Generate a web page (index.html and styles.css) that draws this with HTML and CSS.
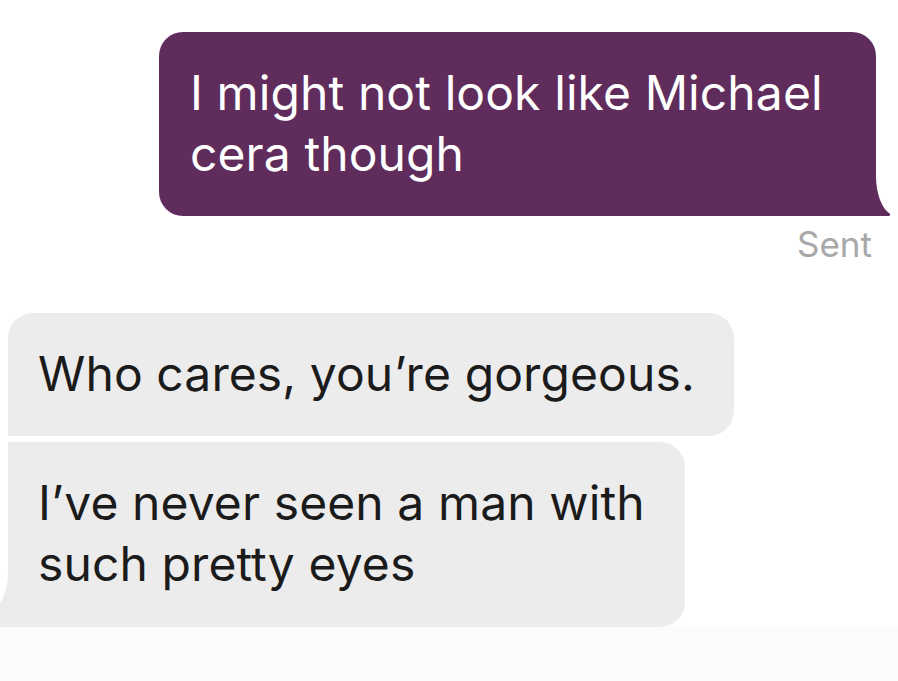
FILE: index.html
```html
<!DOCTYPE html>
<html lang="en">
<head>
<meta charset="utf-8">
<title>Chat</title>
<link rel="stylesheet" href="styles.css">
</head>
<body>
<div class="page">
  <div class="thread">
    <div class="row row-out">
      <div class="bubble bubble-out">
        <p class="msg">I might not look like Michael cera though</p>
        <svg class="tail tail-out" width="18" height="40" viewBox="0 0 18 40" aria-hidden="true">
          <path d="M0 0 L2 0 C2 18 8 32 15 37 C17 38.5 16.5 40 14 40 L0 40 Z" fill="#5f2c5c"/>
        </svg>
      </div>
    </div>
    <div class="status">Sent</div>
    <div class="group-in">
      <div class="bubble bubble-in bubble-in-first">
        <p class="msg">Who cares, you’re gorgeous.</p>
      </div>
      <div class="bubble bubble-in bubble-in-last">
        <p class="msg">I’ve never seen a man with such pretty eyes</p>
        <svg class="tail tail-in" width="10" height="54" viewBox="0 0 10 54" aria-hidden="true">
          <path d="M10 0 L10 54 L0 54 L0 30 C4 24 8 14 8 0 Z" fill="#ececec"/>
        </svg>
      </div>
    </div>
  </div>
  <div class="footer"></div>
</div>
</body>
</html>
```
FILE: styles.css
```css
html, body {
  margin: 0;
  padding: 0;
  background: #ffffff;
}

body {
  font-family: Inter, "Noto Sans", sans-serif;
  -webkit-font-smoothing: antialiased;
}

.page {
  width: 898px;
  height: 681px;
  display: flex;
  flex-direction: column;
  overflow: hidden;
}

.thread {
  display: flex;
  flex-direction: column;
  padding-top: 32px;
}

.row-out {
  display: flex;
  justify-content: flex-end;
  padding-right: 22px;
}

.bubble {
  position: relative;
  box-sizing: border-box;
}

.msg {
  margin: 0;
  font-size: 48px;
  line-height: 61px;
  letter-spacing: 0.1px;
}

.bubble-out {
  width: 717px;
  height: 184px;
  background: #5f2c5c;
  color: #ffffff;
  border-radius: 24px 24px 0 24px;
  padding: 30px 40px 30px 31px;
}

.tail-out {
  position: absolute;
  right: -16px;
  bottom: 0;
}

.status {
  align-self: flex-end;
  margin-right: 26px;
  margin-top: 10px;
  font-size: 35px;
  line-height: 36px;
  color: #a8a8a8;
}

.group-in {
  display: flex;
  flex-direction: column;
  gap: 6px;
  margin-top: 51px;
  padding-left: 8px;
}

.bubble-in {
  background: #ececec;
  color: #1b1b1b;
  padding: 30px 30px 30px 30px;
}

.bubble-in-first {
  width: 726px;
  height: 123px;
  border-radius: 25px 25px 25px 0;
}

.bubble-in-last {
  width: 677px;
  height: 185px;
  border-radius: 0 25px 25px 0;
}

.tail-in {
  position: absolute;
  left: -8px;
  bottom: 0;
}

.footer {
  flex: 1;
  background: #fcfbfa;
}
```
